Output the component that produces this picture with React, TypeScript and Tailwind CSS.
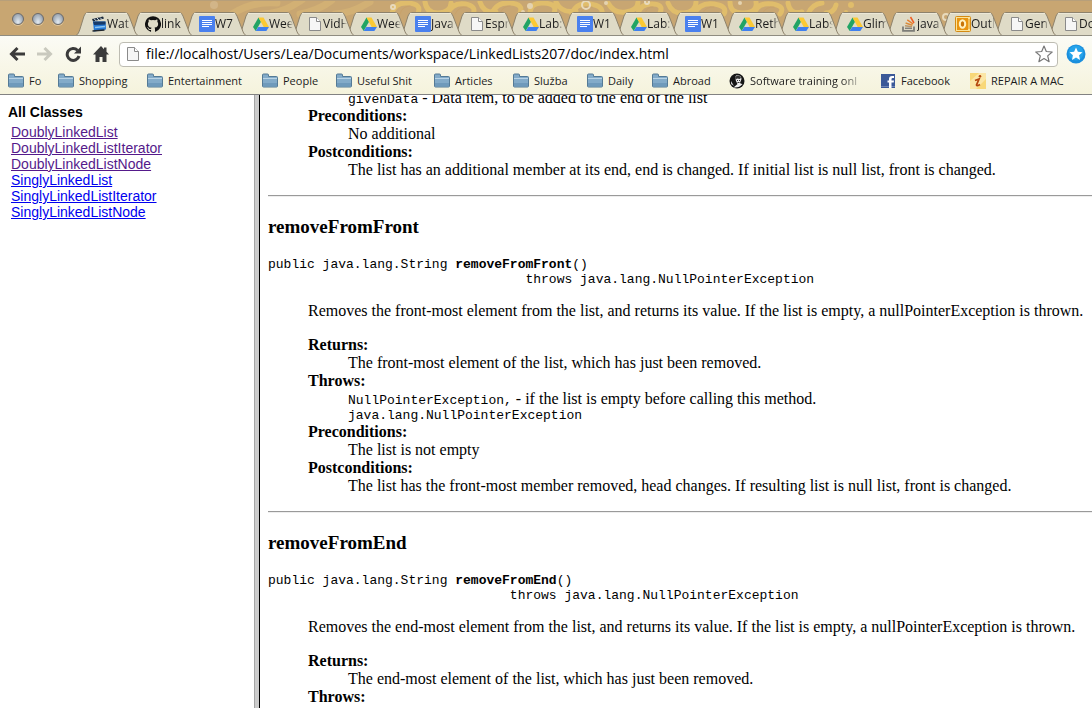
import type { ReactNode } from "react";

type IconKind =
  | "clapper" | "github" | "docs" | "drive" | "page" | "stack" | "outlook"
  | "folder" | "training" | "facebook" | "repair";

function Icon({ kind }: { kind: IconKind }) {
  const art: Record<IconKind, ReactNode> = {
    clapper: (
      <>
        <path d="M1 3l11-2.500 1 2-11 3z" fill="#1d2b3c" />
        <path d="M3 2.600l2 2.200M6 2l2 2.200M9 1.500l2 2" stroke="#d8e4ee" strokeWidth="1" />
        <path d="M2 5.500h12.500l.5 8-12 2z" fill="#2478d4" />
        <path d="M2 5.500h12.500v3L3 9z" fill="#173a68" />
        <path d="M4 11.500l10-1" stroke="#8cc6f5" strokeWidth="1.600" />
        <path d="M1.500 15l12-1" stroke="#20262e" strokeWidth="1.400" />
      </>
    ),
    github: (
      <path fill="#111" d="M8 .2a8 8 0 0 0-2.500 15.600c.4.070.55-.170.55-.380v-1.500c-2.200.48-2.700-.94-2.700-.94-.36-.92-.89-1.170-.89-1.170-.73-.5.060-.49.060-.49.8.06 1.230.83 1.230.83.71 1.220 1.870.87 2.330.66.07-.52.280-.87.5-1.070-1.780-.2-3.640-.89-3.640-3.950 0-.87.310-1.590.82-2.150-.08-.2-.36-1.020.08-2.120 0 0 .67-.21 2.200.82a7.600 7.600 0 0 1 4 0c1.530-1.040 2.200-.82 2.200-.82.44 1.100.16 1.920.08 2.120.51.56.82 1.270.82 2.150 0 3.070-1.870 3.750-3.650 3.950.29.25.54.73.54 1.480v2.190c0 .21.150.46.550.38A8 8 0 0 0 8 .2z" />
    ),
    docs: (
      <>
        <rect width="16" height="16" rx="1" fill="#4a80ee" />
        <path d="M3 4.500h10M3 6.500h10M3 8.500h10M3 10.500h7" stroke="#fff" strokeWidth="1" />
      </>
    ),
    drive: (
      <>
        <path d="M5.500 1.500L0 11l2.700 4L8 5.700z" fill="#21a464" />
        <path d="M5.500 1.500h5L16 11h-5.300z" fill="#fbc934" />
        <path d="M5.300 11H16l-2.700 4H2.700z" fill="#3f7fee" />
      </>
    ),
    page: (
      <>
        <path d="M2.500 1.500h7l4 4v9h-11z" fill="#f6f6f6" stroke="#8a8a8a" />
        <path d="M9.500 1.500v4h4" fill="#fff" stroke="#8a8a8a" />
      </>
    ),
    stack: (
      <>
        <path d="M2 10.500v4.300h11v-4.300" fill="none" stroke="#7d7d78" strokeWidth="1.800" />
        <path d="M4 12.300h7" stroke="#85817a" strokeWidth="1.500" />
        <path d="M4 9.800l7 1" stroke="#b9966a" strokeWidth="1.500" />
        <path d="M4.600 7l6.800 2.200" stroke="#d98b3a" strokeWidth="1.500" />
        <path d="M6.300 3.800l5.800 4.200" stroke="#e77d2b" strokeWidth="1.500" />
        <path d="M9.500 1l3.500 6" stroke="#ef5d22" strokeWidth="1.500" />
      </>
    ),
    outlook: (
      <>
        <rect x=".5" y=".5" width="15" height="15" rx="1" fill="#fbe39a" stroke="#d48a12" />
        <rect x="2" y="2" width="11" height="12" fill="#e8940f" />
        <ellipse cx="7.500" cy="8" rx="2.700" ry="3.800" fill="#c87408" stroke="#fff1c0" strokeWidth="2" />
        <path d="M14 3v10" stroke="#e39a22" />
      </>
    ),
    folder: (
      <>
        <path d="M.5 3V2q0-1 1-1h4q1 0 1 1v1.500h8q1 0 1 1V13q0 1-1 1h-13q-1 0-1-1z" fill="#83abc9" stroke="#547a96" />
        <path d="M1 5.500h14" stroke="#b9d3e5" />
        <path d="M1 10h14v3.500H1z" fill="#6f9abb" />
      </>
    ),
    training: (
      <>
        <circle cx="8" cy="8" r="7.500" fill="#151515" />
        <path d="M7 2.500q5-1 5.500 3.500l-1.500 4q1 1 2.500 1-3 4-9 3.500l4-3.500L7 8 6 5z" fill="#eee" />
        <path d="M6 4.500q3-4 6 0l-1 1.500-3-.5-1.500 1.500z" fill="#333" />
        <path d="M8 7.500h1M10 7.500h1M8.500 9.500h2" stroke="#333" />
        <path d="M2 8l3 5-3-2z" fill="#ccc" />
      </>
    ),
    facebook: (
      <>
        <rect x="1" y="1" width="14" height="14" fill="#3b5998" />
        <path d="M1 13h14v1H1z" fill="#6d84b4" />
        <path d="M9 15V9.500H7.500v-2H9V6q0-3 3-3h2v2h-1.300q-1.200 0-1.200 1.200v1.300H14l-.3 2h-2.200V15z" fill="#fff" />
      </>
    ),
    repair: (
      <>
        <rect width="16" height="16" fill="#f8d878" />
        <path d="M0 8L9 0h7v6L6 16H0z" fill="#fbe6a6" />
        <path d="M5 7.500l4-1.500-2.500 6q.5 1.500 3.500-.5" fill="none" stroke="#b5480e" strokeWidth="1.800" />
        <circle cx="10" cy="3.200" r="1.300" fill="#b5480e" />
      </>
    ),
  };
  return (
    <svg viewBox="0 0 16 16" className="size-4 shrink-0" aria-hidden="true">
      {art[kind]}
    </svg>
  );
}

const tabs: { icon: IconKind; label: string }[] = [
  { icon: "clapper", label: "Wat" },
  { icon: "github", label: "link" },
  { icon: "docs", label: "W7" },
  { icon: "drive", label: "Wee" },
  { icon: "page", label: "VidH" },
  { icon: "drive", label: "Wee" },
  { icon: "docs", label: "Java" },
  { icon: "page", label: "Espr" },
  { icon: "drive", label: "Lab:" },
  { icon: "docs", label: "W1" },
  { icon: "drive", label: "Lab:" },
  { icon: "docs", label: "W1" },
  { icon: "drive", label: "Reth" },
  { icon: "drive", label: "Labs" },
  { icon: "drive", label: "Glim" },
  { icon: "stack", label: "java" },
  { icon: "outlook", label: "Outl" },
  { icon: "page", label: "Gen" },
  { icon: "page", label: "Do" },
];

function Tab({ icon, label, order }: { icon: IconKind; label: string; order: number }) {
  return (
    <button
      type="button"
      style={{ zIndex: order }}
      className="relative flex h-6 w-[54px] shrink-0 items-center pl-[15px] text-left"
    >
      <svg viewBox="0 0 62 24" className="absolute top-0 left-0 h-6 w-[62px]" aria-hidden="true">
        <path
          d="M0 23.500C2 22.500 3 20 4 17L8 4Q9 .5 12 .5H49Q52 .5 53 4L58 17C59 20 60 22.500 62 23.500"
          fill="#dfdbc7"
          stroke="#8d826c"
        />
        <path d="M10 1.500H51" stroke="#ece8d8" />
      </svg>
      <span className="relative flex">
        <Icon kind={icon} />
      </span>
      <span className="relative w-6 shrink-0 overflow-hidden text-[12px] leading-4 whitespace-nowrap [mask-image:linear-gradient(to_right,#000_75%,transparent)]">
        {label}
      </span>
    </button>
  );
}

function Swirls() {
  return (
    <svg
      className="absolute top-0 left-0 h-9 w-[1092px]"
      viewBox="0 0 1092 36"
      fill="none"
      strokeLinecap="round"
      aria-hidden="true"
    >
      <g stroke="#d2b074" strokeWidth="7">
        <path d="M232 14q20-13 45-11M262 14q20 0 40-14M300 14q20-4 32-14M335 14q15 0 35-12" />
      </g>
      <g stroke="#e0bd6b" strokeWidth="5">
        <path d="M392 14q2-12 16-11t10 10M425 2q2 12 14 11t12-10M447 14q6-12 18-10t8 10M480 2q4 12 16 10M492 14q4-12 18-11t10 10M530 14q0-12 14-11t10 10M556 2q6 12 20 9" />
        <path d="M572 14q4-12 18-10t12 10M608 3q6 11 18 9t12-10M638 14q2-10 14-10t8 9M668 3q4 11 16 10t12-11M694 14q6-12 20-10t10 10M730 2q0 12 14 11t12-11M754 14q4-12 18-10t8 10M788 3q2 12 14 9" />
        <path d="M808 14q4-10 14-11M826 13q8 0 10-8" />
      </g>
      <g stroke="#c8a26a" strokeWidth="1">
        <path d="M400 14q2-8 10-8M455 14q4-8 12-7M500 14q2-8 10-8M580 14q4-8 12-7M645 14q2-8 8-7M702 14q4-8 12-7M762 14q4-8 12-7" />
      </g>
      <g fill="#e0bd6b">
        <circle cx="851" cy="5" r="3" />
        <circle cx="846" cy="12" r="2" />
      </g>
      <g fill="#e4d3b0">
        <circle cx="214" cy="5" r="4" fill="#d2b588" />
        <circle cx="530" cy="6" r="3" />
        <circle cx="523" cy="12" r="2" />
        <circle cx="606" cy="3" r="2" />
        <circle cx="740" cy="3" r="2" />
      </g>
      <g stroke="#e8dabc" strokeWidth="2">
        <circle cx="393" cy="7" r="2" />
        <circle cx="586" cy="5" r="4" />
        <circle cx="647" cy="2" r="2" />
        <circle cx="946" cy="17" r="3" />
      </g>
    </svg>
  );
}

const bookmarks: { icon: IconKind; label: string; box: string; fade?: boolean }[] = [
  { icon: "folder", label: "Fo", box: "w-[50px]" },
  { icon: "folder", label: "Shopping", box: "w-[89px]" },
  { icon: "folder", label: "Entertainment", box: "w-[115px]" },
  { icon: "folder", label: "People", box: "w-[74px]" },
  { icon: "folder", label: "Useful Shit", box: "w-[98px]" },
  { icon: "folder", label: "Articles", box: "w-[79px]" },
  { icon: "folder", label: "Služba", box: "w-[74px]" },
  { icon: "folder", label: "Daily", box: "w-[65px]" },
  { icon: "folder", label: "Abroad", box: "w-[77px]" },
  { icon: "training", label: "Software training onl", box: "w-[151px]", fade: true },
  { icon: "facebook", label: "Facebook", box: "w-[90px]" },
  { icon: "repair", label: "REPAIR A MAC", box: "w-[110px]" },
];

function BrowserChrome() {
  return (
    <header className="shrink-0 font-['Open_Sans','Noto_Sans',sans-serif] text-[#1c1c1c]">
      <div className="relative flex h-9 items-end overflow-hidden border-b border-[#8f8c80] bg-[#c8a672]">
        <Swirls />
        <div className="absolute inset-x-0 top-0 h-px bg-[#b79f7a]" />
        <div className="relative flex w-[76px] shrink-0 gap-2 self-center pt-0.5 pl-3">
          {["Close", "Minimize", "Zoom"].map((name) => (
            <button
              key={name}
              type="button"
              aria-label={name}
              className="size-3 rounded-full border border-[#6b6a6a] bg-radial-[at_50%_80%] from-[#e3ebf2] to-[#7f8a98] shadow-[0_1px_0_#e0c79c]"
            />
          ))}
        </div>
        <nav className="-mb-px flex" aria-label="Tabs">
          {tabs.map((t, i) => (
            <Tab key={i} icon={t.icon} label={t.label} order={tabs.length - i} />
          ))}
        </nav>
      </div>

      <div className="border-b border-[#828282] bg-linear-to-b from-[#fbfbf5] to-[#f5f3dc]">
        <div className="flex h-9 items-center pl-2">
          <button type="button" aria-label="Back" className="w-7">
            <svg viewBox="0 0 18 16" className="h-4 w-[18px]" fill="none" stroke="#3b3b3b" strokeWidth="3">
              <path d="M17 8H4M9.500 2L3.500 8l6 6" />
            </svg>
          </button>
          <button type="button" aria-label="Forward" className="w-7">
            <svg viewBox="0 0 18 16" className="h-4 w-[18px]" fill="none" stroke="#c9c9be" strokeWidth="3">
              <path d="M1 8h13M8.500 2l6 6-6 6" />
            </svg>
          </button>
          <button type="button" aria-label="Reload" className="w-7">
            <svg viewBox="0 0 18 16" className="h-4 w-[18px]" fill="none" stroke="#3b3b3b" strokeWidth="3">
              <path d="M13.500 4.200A6 6 0 1 0 15 10" />
              <path d="M17 .5V7.500H10z" fill="#3b3b3b" stroke="none" />
            </svg>
          </button>
          <button type="button" aria-label="Home" className="w-[27px]">
            <svg viewBox="0 0 18 16" className="h-4 w-[18px]" fill="#3b3b3b">
              <path d="M9 0L1 8.500h2.500V16H7.500v-5h3v5h4V8.500H17L14.500 5.800V1.500h-2.500v1.700z" />
            </svg>
          </button>
          <div className="flex h-[25px] min-w-0 flex-1 items-center rounded-sm border border-[#bdbcb2] bg-white pr-1 pl-[5px]">
            <Icon kind="page" />
            <input
              aria-label="Address"
              defaultValue="file://localhost/Users/Lea/Documents/workspace/LinkedLists207/doc/index.html"
              className="ml-[5px] min-w-0 flex-1 bg-transparent text-sm leading-5 text-black outline-none"
            />
            <button type="button" aria-label="Bookmark this page">
              <svg viewBox="0 0 18 18" className="size-[18px]" fill="#fff" stroke="#777" strokeWidth="1.200" strokeLinejoin="round">
                <path d="M9 1l2.300 5.500 5.900.5-4.500 3.900 1.400 5.800L9 13.600l-5.100 3.100 1.400-5.800L.8 7l5.900-.5z" />
              </svg>
            </button>
          </div>
          <button type="button" aria-label="Extension" className="mr-[6px] ml-2">
            <svg viewBox="0 0 20 20" className="size-5">
              <circle cx="10" cy="10" r="9.500" fill="#1b8fdd" />
              <circle cx="10" cy="9" r="7.500" fill="#25a3ea" />
              <path d="M10 3.500l1.900 4.200 4.600.5-3.400 3.100.9 4.600-4-2.300-4 2.300.9-4.600-3.400-3.100 4.600-.5z" fill="#fff" />
            </svg>
          </button>
        </div>
        <nav className="flex h-[22px] items-center overflow-hidden pb-1 pl-2 text-[11px] leading-4" aria-label="Bookmarks">
          {bookmarks.map((b) => (
            <a key={b.label} href="#" className={`flex shrink-0 items-center gap-[5px] ${b.box}`}>
              <Icon kind={b.icon} />
              <span
                className={
                  b.fade
                    ? "w-[115px] overflow-hidden whitespace-nowrap [mask-image:linear-gradient(to_right,#000_80%,transparent)]"
                    : "whitespace-nowrap"
                }
              >
                {b.label}
              </span>
            </a>
          ))}
        </nav>
      </div>
    </header>
  );
}

const classes = [
  { name: "DoublyLinkedList", visited: true },
  { name: "DoublyLinkedListIterator", visited: true },
  { name: "DoublyLinkedListNode", visited: true },
  { name: "SinglyLinkedList", visited: false },
  { name: "SinglyLinkedListIterator", visited: false },
  { name: "SinglyLinkedListNode", visited: false },
];

function Mono({ children }: { children: ReactNode }) {
  return <code className="font-['Liberation_Mono',monospace] text-[13px] leading-[15px]">{children}</code>;
}

function Detail({ term, children }: { term: string; children?: ReactNode }) {
  return (
    <>
      <dt className="font-bold">{term}:</dt>
      {children && <dd className="pl-10">{children}</dd>}
    </>
  );
}

function Method({ name, indent, summary, children }: { name: string; indent: number; summary: string; children: ReactNode }) {
  return (
    <section>
      <hr className="mt-4 border-t border-b border-t-[#9a9a9a] border-b-[#eeeeee]" />
      <h3 className="mt-[19px] text-[19px] leading-[22px] font-bold">{name}</h3>
      <pre className="mt-[19px] font-['Liberation_Mono',monospace] text-[13px] leading-[15px]">
        {"public java.lang.String "}
        <b>{name}</b>
        {"()\n" + " ".repeat(indent) + "throws java.lang.NullPointerException"}
      </pre>
      <div className="pl-10">
        <p className="mt-[15px]">{summary}</p>
        <dl className="mt-4">{children}</dl>
      </div>
    </section>
  );
}

export default function App() {
  return (
    <div className="flex h-screen flex-col overflow-hidden bg-white text-black">
      <BrowserChrome />
      <div className="flex min-h-0 flex-1">
        <aside className="w-[254px] shrink-0 px-2 pt-[9px] font-['Liberation_Sans',sans-serif] text-sm leading-4">
          <h2 className="font-bold">All Classes</h2>
          <ul className="mt-1 pl-[3px]">
            {classes.map((c) => (
              <li key={c.name}>
                <a href="#" className={c.visited ? "text-[#551a8b] underline" : "text-[#0000ee] underline"}>
                  {c.name}
                </a>
              </li>
            ))}
          </ul>
        </aside>
        <div className="w-1.5 shrink-0 border-r border-l border-r-black border-l-[#a5a5a5] bg-[#cccccc]" />
        <main className="min-w-0 flex-1 overflow-hidden pl-2 font-['Liberation_Serif',serif] text-base leading-[18px] whitespace-nowrap">
          <dl className="-mt-1.5 pl-10">
            <dd className="pl-10">
              <Mono>givenData</Mono> - Data item, to be added to the end of the list
            </dd>
            <Detail term="Preconditions">No additional</Detail>
            <Detail term="Postconditions">
              The list has an additional member at its end, end is changed. If initial list is null list, front is changed.
            </Detail>
          </dl>
          <Method
            name="removeFromFront"
            indent={33}
            summary="Removes the front-most element from the list, and returns its value. If the list is empty, a nullPointerException is thrown."
          >
            <Detail term="Returns">The front-most element of the list, which has just been removed.</Detail>
            <Detail term="Throws">
              <p className="h-[18px]">
                <Mono>NullPointerException,</Mono> - if the list is empty before calling this method.
              </p>
              <p className="flex">
                <Mono>java.lang.NullPointerException</Mono>
              </p>
            </Detail>
            <Detail term="Preconditions">The list is not empty</Detail>
            <Detail term="Postconditions">
              The list has the front-most member removed, head changes. If resulting list is null list, front is changed.
            </Detail>
          </Method>
          <Method
            name="removeFromEnd"
            indent={31}
            summary="Removes the end-most element from the list, and returns its value. If the list is empty, a nullPointerException is thrown."
          >
            <Detail term="Returns">The end-most element of the list, which has just been removed.</Detail>
            <Detail term="Throws" />
          </Method>
        </main>
      </div>
    </div>
  );
}
